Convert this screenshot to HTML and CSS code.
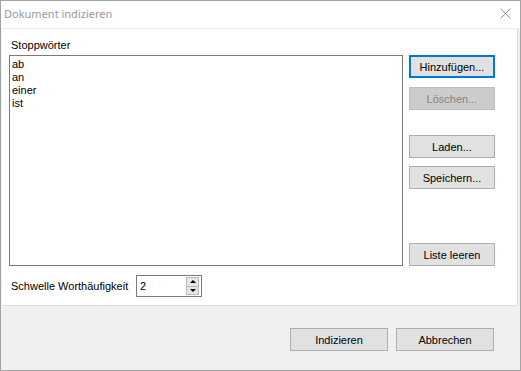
FILE: index.html
```html
<!DOCTYPE html>
<html lang="de">
<head>
    <meta charset="UTF-8">
    <meta name="viewport" content="width=device-width, initial-scale=1.0">
    <title>Dokument indizieren</title>
    <link rel="stylesheet" href="styles.css">
</head>
<body>
    <div class="window">
        <div class="titlebar">
            <span class="title">Dokument indizieren</span>
            <svg class="close" width="11" height="11" viewBox="0 0 11 11">
                <path d="M0.5 0.5 L10.5 10.5 M10.5 0.5 L0.5 10.5" stroke="#8f8f8f" stroke-width="1" fill="none"/>
            </svg>
        </div>

        <div class="client">
            <div class="panel">
                <div class="label">Stoppwörter</div>
                <div class="main">
                    <ul class="listbox">
                        <li>ab</li>
                        <li>an</li>
                        <li>einer</li>
                        <li>ist</li>
                    </ul>
                    <div class="side">
                        <button class="btn default">Hinzufügen...</button>
                        <button class="btn" disabled>Löschen...</button>
                        <button class="btn load">Laden...</button>
                        <button class="btn">Speichern...</button>
                        <button class="btn clear">Liste leeren</button>
                    </div>
                </div>
                <div class="threshold">
                    <label for="freq">Schwelle Worthäufigkeit</label>
                    <div class="spin">
                        <input id="freq" type="text" value="2">
                        <div class="spin-btns">
                            <span class="up"></span>
                            <span class="down"></span>
                        </div>
                    </div>
                </div>
            </div>

            <div class="footer">
                <button class="btn wide">Indizieren</button>
                <button class="btn wide">Abbrechen</button>
            </div>
        </div>
    </div>
</body>
</html>
```

FILE: styles.css
```css
* {
    box-sizing: border-box;
}
body {
    margin: 0;
    font-family: "Liberation Sans", Arial, sans-serif;
    font-size: 11px;
    color: #000;
}
.window {
    width: 521px;
    height: 371px;
    border: 1px solid #a3a3a3;
    display: flex;
    flex-direction: column;
    background: #f0f0f0;
}
.titlebar {
    height: 27px;
    background: #fff;
    display: flex;
    align-items: flex-start;
    padding: 5px 0 0 3px;
}
.title {
    font-family: "Noto Sans", "Open Sans", sans-serif;
    font-size: 11px;
    line-height: 15px;
    color: #999;
}
.close {
    margin: 2px 9px 0 auto;
}
.client {
    flex: 1;
    display: flex;
    flex-direction: column;
    padding: 1px 2px 0 1px;
}
.panel {
    background: #fff;
    border-right: 1px solid #dcdcdc;
    border-bottom: 1px solid #dcdcdc;
    padding: 10px 0 8px 7px;
}
.label {
    line-height: 13px;
    margin: 0 0 3px 2px;
}
.main {
    display: flex;
}
.listbox {
    list-style: none;
    margin: 0;
    width: 394px;
    height: 211px;
    border: 1px solid #7a7a7a;
    padding: 2px 2px;
}
.listbox li {
    line-height: 13px;
}
.side {
    display: flex;
    flex-direction: column;
    margin-left: 6px;
}
.btn {
    font-family: "Liberation Sans", Arial, sans-serif;
    font-size: 11px;
    color: #000;
    width: 86px;
    height: 23px;
    padding: 0;
    background: #e1e1e1;
    border: 1px solid #adadad;
    margin-bottom: 9px;
}
.btn.default {
    border: 2px solid #0078d7;
}
.btn:disabled {
    background: #cccccc;
    border-color: #bfbfbf;
    color: #838383;
}
.btn.load {
    margin-top: 16px;
    margin-bottom: 8px;
}
.btn.clear {
    margin-top: auto;
    margin-bottom: 0;
}
.threshold {
    display: flex;
    align-items: center;
    margin-top: 9px;
}
.threshold label {
    width: 125px;
    margin-left: 2px;
    line-height: 13px;
}
.spin {
    width: 66px;
    height: 22px;
    border: 1px solid #7a7a7a;
    display: flex;
    align-items: center;
    padding: 0 2px 0 3px;
}
.spin input {
    all: unset;
    flex: 1;
    width: 40px;
    font-family: "Liberation Sans", Arial, sans-serif;
    font-size: 11px;
    line-height: 13px;
}
.spin-btns {
    width: 13px;
    height: 18px;
    display: flex;
    flex-direction: column;
}
.spin-btns span {
    flex: 1;
    background: #e6e6e6;
    border: 1px solid #b9b9b9;
    display: flex;
    align-items: center;
    justify-content: center;
}
.spin-btns span + span {
    border-top: none;
}
.spin-btns .up::after {
    content: "";
    border-left: 3px solid transparent;
    border-right: 3px solid transparent;
    border-bottom: 3px solid #000;
}
.spin-btns .down::after {
    content: "";
    border-left: 3px solid transparent;
    border-right: 3px solid transparent;
    border-top: 3px solid #000;
}
.footer {
    flex: 1;
    display: flex;
    justify-content: flex-end;
    align-items: flex-start;
    gap: 8px;
    padding: 22px 24px 0 0;
}
.btn.wide {
    width: 98px;
    margin: 0;
}
```
